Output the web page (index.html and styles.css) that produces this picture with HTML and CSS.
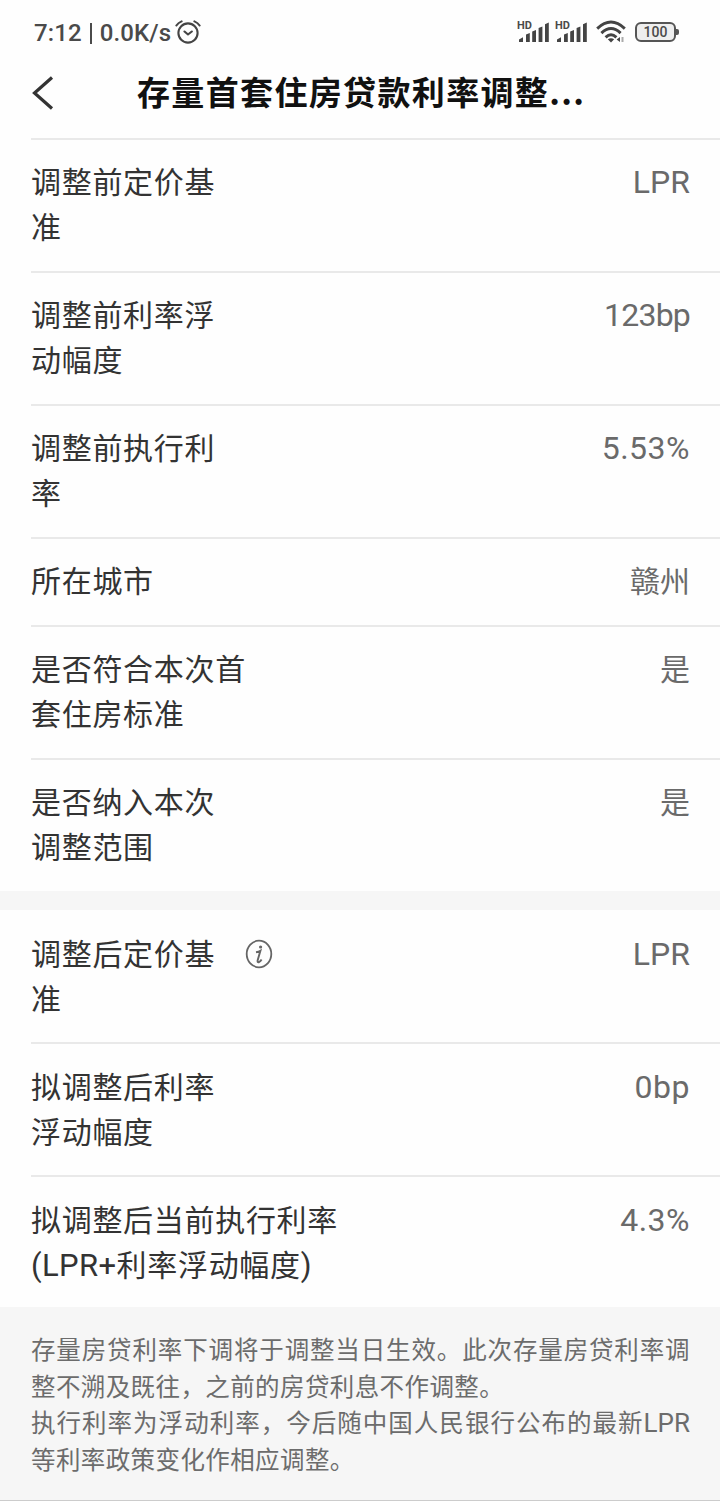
FILE: index.html
```html
<!DOCTYPE html>
<html lang="zh-CN">
<head>
    <meta charset="UTF-8">
    <title>存量首套住房贷款利率调整</title>
    <link rel="stylesheet" href="styles.css">
</head>
<body>

    <!-- Status bar -->
    <div class="status-bar">
        <span class="status-text">7:12 <span class="bar"></span> 0.0K/s</span>
        <svg class="alarm" width="26" height="24" viewBox="0 0 26 24" fill="none" stroke="#444" stroke-width="2.1" stroke-linecap="round" stroke-linejoin="round">
            <circle cx="13" cy="13" r="9.6"/>
            <path d="M9.5 11.5l3.5 3 3.8-3M1.4 5.5Q3.2 2.8 6.6 1.4M24.6 5.5Q22.8 2.8 19.4 1.4"/>
        </svg>
        <div class="status-icons">
            <div class="signal">
                <span class="hd">HD</span>
                <svg width="34" height="22" viewBox="0 0 34 22" fill="#444">
                    <path d="M2 21v-2.5l4-2.2V21zM9 21v-7.5l3.8-1.4V21zM15.2 21V10.5l3.8-1.5v12zM21.6 21V7l3.8-1.6V21zM28 21V3.2l3.8-1.6V21z"/>
                </svg>
            </div>
            <div class="signal">
                <span class="hd">HD</span>
                <svg width="34" height="22" viewBox="0 0 34 22" fill="#444">
                    <path d="M2 21v-2.5l4-2.2V21zM9 21v-7.5l3.8-1.4V21zM15.2 21V10.5l3.8-1.5v12zM21.6 21V7l3.8-1.6V21zM28 21V3.2l3.8-1.6V21z"/>
                </svg>
            </div>
            <svg class="wifi" width="30" height="24" viewBox="0 0 30 24" fill="none" stroke="#444" stroke-width="2.9">
                <path d="M1.2 8.6Q15-4.4 28.8 8.6M5.4 13.1Q15 4 24.6 13.1M9.6 17.4Q15 12 20.4 17.4"/>
                <path d="M11.8 19.3Q15 17 18.2 19.3L15 22.6z" fill="#444" stroke="none"/>
                <path d="M24 17v5l-3.4-2.5z" fill="#444" stroke="none"/>
                <path d="M26.5 17v5" stroke="#aaa" stroke-width="2"/>
            </svg>
            <div class="battery"><span class="battery-level">100</span></div>
        </div>
    </div>

    <!-- Page header -->
    <div class="header">
        <svg class="back" width="24" height="34" viewBox="0 0 24 34" fill="none" stroke="#333" stroke-width="3.2">
            <path d="M22 1.5L4.5 17L22 32.5"/>
        </svg>
        <h1>存量首套住房贷款利率调整...</h1>
    </div>

    <!-- Before adjustment -->
    <div class="group">
        <div class="row">
            <div class="label">调整前定价基<br>准</div>
            <div class="value">LPR</div>
        </div>
        <div class="row">
            <div class="label">调整前利率浮<br>动幅度</div>
            <div class="value value-bp">123bp</div>
        </div>
        <div class="row">
            <div class="label">调整前执行利<br>率</div>
            <div class="value value-rate">5.53%</div>
        </div>
        <div class="row">
            <div class="label">所在城市</div>
            <div class="value value-cn">赣州</div>
        </div>
        <div class="row">
            <div class="label">是否符合本次首<br>套住房标准</div>
            <div class="value value-cn">是</div>
        </div>
        <div class="row">
            <div class="label">是否纳入本次<br>调整范围</div>
            <div class="value value-cn">是</div>
        </div>
    </div>

    <!-- After adjustment -->
    <div class="group group-after">
        <div class="row">
            <div class="label">调整后定价基<br>准</div>
            <svg class="info" width="28" height="30" viewBox="0 0 28 30" fill="none" stroke="#666">
                <ellipse cx="14" cy="15" rx="12.3" ry="13.3" stroke-width="1.8"/>
                <circle cx="15.6" cy="8" r="1.6" fill="#666" stroke="none"/>
                <path d="M11 13.2Q14 12.8 15.4 11.8L12.6 21.5Q12.3 23.8 14.2 23Q15.5 22.3 16.6 20.6" stroke-width="1.9"/>
            </svg>
            <div class="value">LPR</div>
        </div>
        <div class="row">
            <div class="label">拟调整后利率<br>浮动幅度</div>
            <div class="value value-rate">0bp</div>
        </div>
        <div class="row">
            <div class="label">拟调整后当前执行利率<br><span class="latin">(LPR+</span>利率浮动幅度<span class="latin">)</span></div>
            <div class="value value-rate">4.3%</div>
        </div>
    </div>

    <!-- Notes -->
    <div class="notes">
        <p>存量房贷利率下调将于调整当日生效。此次存量房贷利率调整不溯及既往，之前的房贷利息不作调整。</p>
        <p>执行利率为浮动利率，今后随中国人民银行公布的最新<span class="latin">LPR</span>等利率政策变化作相应调整。</p>
    </div>

</body>
</html>
```
FILE: styles.css
```css
* {
    box-sizing: border-box;
}

body {
    display: flex;
    flex-direction: column;
    height: 1501px;
    margin: 0;
    overflow: hidden;
    font-family: "Noto Sans CJK SC", sans-serif;
    background-color: #fefefe;
    color: #333;
}

/* Status bar */
.status-bar {
    display: flex;
    align-items: center;
    height: 64px;
    padding: 0 44px 0 34px;
    color: #4a4a4a;
    font-family: Roboto, sans-serif;
}

.status-text {
    padding-top: 2px;
    font-size: 24px;
    font-weight: 500;
    letter-spacing: 0.1px;
    white-space: nowrap;
}

.bar {
    display: inline-block;
    width: 2px;
    height: 21px;
    margin: 0 2px;
    background-color: #4a4a4a;
    vertical-align: -3px;
}

.alarm {
    margin-left: 4px;
}

.status-icons {
    display: flex;
    align-items: center;
    margin-left: auto;
}

.signal {
    position: relative;
    width: 34px;
    height: 22px;
    margin-right: 4px;
}

.hd {
    position: absolute;
    left: 0;
    top: -1px;
    font-size: 11px;
    font-weight: 700;
    line-height: 11px;
}

.wifi {
    margin: 0 9px 0 3px;
}

.battery {
    position: relative;
    display: flex;
    align-items: center;
    justify-content: center;
    width: 41px;
    height: 20px;
    border: 2px solid #555;
    border-radius: 6px;
    background-color: #eee;
}

.battery::after {
    content: "";
    position: absolute;
    right: -5px;
    top: 5px;
    width: 3px;
    height: 6px;
    background-color: #555;
    border-radius: 0 2px 2px 0;
}

.battery-level {
    font-size: 14px;
    font-weight: 500;
    line-height: 16px;
}

/* Page header */
.header {
    display: flex;
    align-items: center;
    height: 74px;
    padding: 0 0 16px 30px;
}

h1 {
    margin: -5px 0 0 83px;
    font-size: 33px;
    font-weight: 700;
    letter-spacing: 1.35px;
    line-height: 48px;
    color: #111;
    white-space: nowrap;
}

/* Detail rows */
.row {
    display: flex;
    align-items: flex-start;
    margin-left: 31px;
    padding: 18px 30px 23px 0;
    border-top: 2px solid #e9e9e9;
}

.label {
    font-size: 30px;
    letter-spacing: 0.7px;
    line-height: 45px;
    white-space: nowrap;
}

.value {
    margin: 2px 0 -2px auto;
    font-family: Roboto, "Noto Sans CJK SC", sans-serif;
    font-size: 32px;
    line-height: 45px;
    color: #6a6a6a;
}

.value-bp {
    letter-spacing: -0.8px;
}

.value-rate {
    letter-spacing: 0.5px;
}

.value-cn {
    font-size: 30px;
}

.latin {
    font-family: Roboto, sans-serif;
    letter-spacing: 0;
}

.label .latin {
    font-size: 31px;
    letter-spacing: 0.4px;
    line-height: 1;
}

.info {
    margin: 9px 0 0 30px;
}

.group-after {
    border-top: 19px solid #f6f6f6;
}

.group-after .row {
    padding-top: 19px;
    padding-bottom: 22px;
}

.group-after .row:first-child {
    padding-top: 20px;
    border-top: none;
}

.group-after .row:last-child {
    padding-bottom: 21px;
}

/* Notes */
.notes {
    flex: 1;
    padding: 24px 30px 0 31px;
    border-bottom: 1px solid #ccc;
    background-color: #f6f6f6;
    color: #6c6c6c;
    font-size: 24.5px;
    letter-spacing: 0.4px;
    line-height: 36.6px;
    text-align: justify;
}

.notes .latin {
    font-size: 26px;
    line-height: 1;
}

.notes p {
    margin: 0;
}
```
